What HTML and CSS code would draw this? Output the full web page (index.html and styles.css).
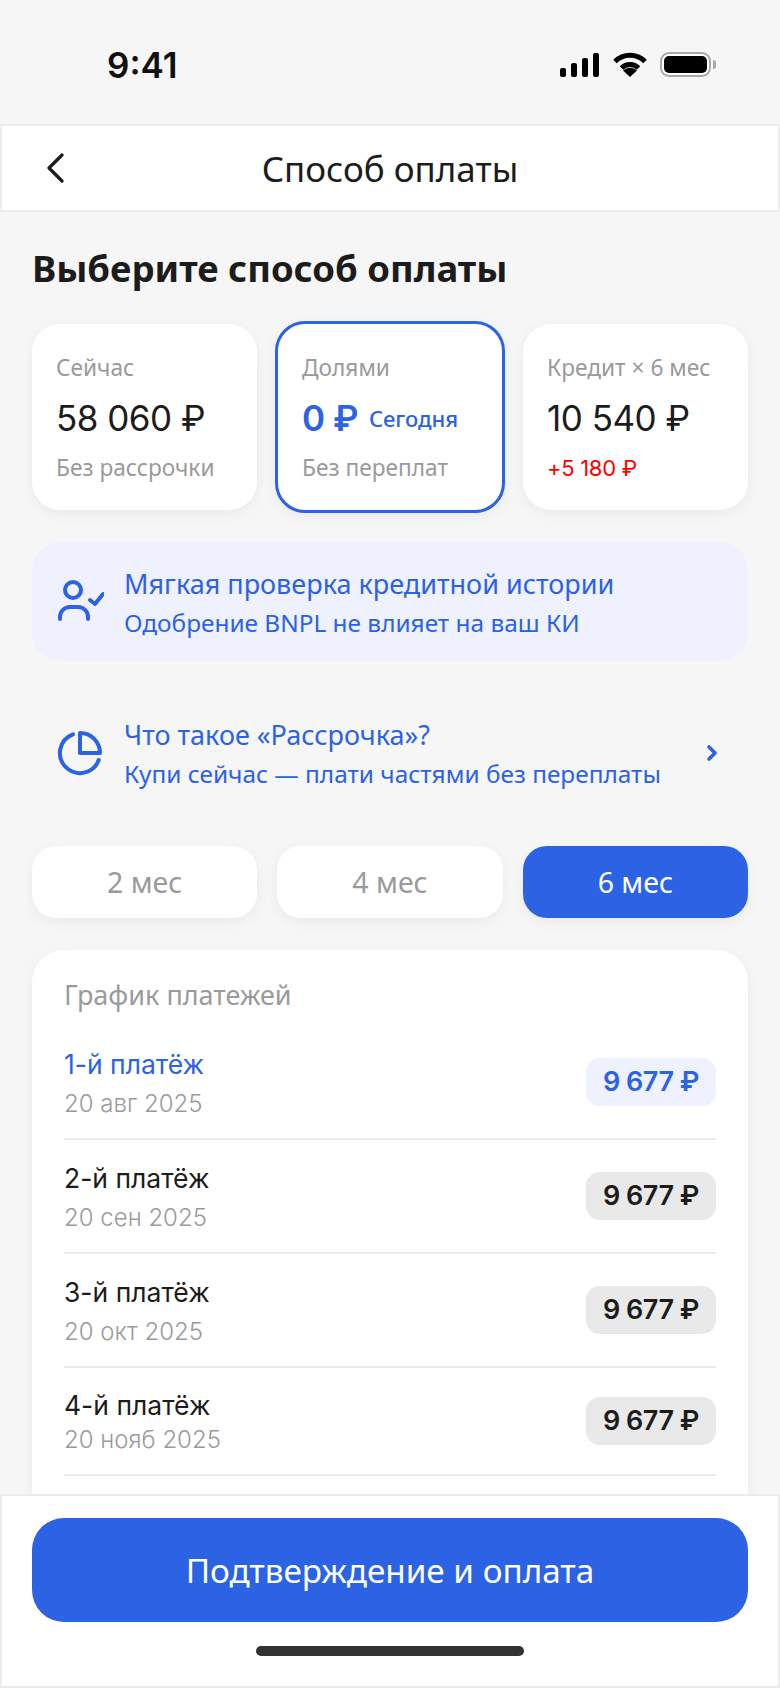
FILE: index.html
```html
<!DOCTYPE html>
<html lang="ru">
<head>
    <meta charset="UTF-8">
    <meta name="viewport" content="width=device-width, initial-scale=1.0">
    <title>Способ оплаты</title>
    <link rel="stylesheet" href="styles.css">
</head>
<body>
    <div class="screen">
        <!-- Статус-бар -->
        <div class="status-bar">
            <span class="time">9:41</span>
            <div class="status-icons">
                <svg class="icon-signal" width="39" height="24" viewBox="0 0 39 24" fill="#000">
                    <rect x="0" y="15" width="6" height="9" rx="2"/>
                    <rect x="11" y="10" width="6" height="14" rx="2"/>
                    <rect x="22" y="5" width="6" height="19" rx="2"/>
                    <rect x="33" y="0" width="6" height="24" rx="2"/>
                </svg>
                <svg class="icon-wifi" width="34" height="25" viewBox="0 0 34 25" fill="none" stroke="#000" stroke-width="5">
                    <path d="M2 9.500A21 21 0 0 1 32 9.500"/>
                    <path d="M8.500 16A12 12 0 0 1 25.500 16"/>
                    <path d="M17 25L10 18.500A10 10 0 0 1 24 18.500Z" fill="#000" stroke="none"/>
                </svg>
                <div class="battery"><div class="battery-fill"></div></div>
                <div class="battery-nub"></div>
            </div>
        </div>

        <!-- Шапка -->
        <header class="top-bar">
            <svg class="back-icon" width="20" height="30" viewBox="0 0 20 30" fill="none" stroke="#1c1c1c" stroke-width="3.200" stroke-linecap="round" stroke-linejoin="round">
                <path d="M16 2L3 15L16 28"/>
            </svg>
            <h2 class="top-title">Способ оплаты</h2>
        </header>

        <!-- Контент -->
        <main class="content">
            <h1 class="page-title">Выберите способ оплаты</h1>

            <div class="plans">
                <div class="plan">
                    <p class="plan-label">Сейчас</p>
                    <p class="plan-price">58 060 ₽</p>
                    <p class="plan-note">Без рассрочки</p>
                </div>
                <div class="plan plan-active">
                    <p class="plan-label">Долями</p>
                    <p class="plan-price plan-price-blue">0 ₽<span class="plan-today">Сегодня</span></p>
                    <p class="plan-note">Без переплат</p>
                </div>
                <div class="plan">
                    <p class="plan-label">Кредит × 6 мес</p>
                    <p class="plan-price">10 540 ₽</p>
                    <p class="plan-note plan-note-red">+5 180 ₽</p>
                </div>
            </div>

            <div class="info-card info-soft">
                <svg class="info-icon" width="48" height="44" viewBox="0 0 48 44" fill="none" stroke="#2c62e4" stroke-width="4" stroke-linecap="round" stroke-linejoin="round">
                    <circle cx="17" cy="10" r="8"/>
                    <path d="M4 39v-2a10 10 0 0 1 10-10h8a10 10 0 0 1 10 10v2"/>
                    <path d="M34 20l5 4l8-10"/>
                </svg>
                <div class="info-body">
                    <p class="info-title">Мягкая проверка кредитной истории</p>
                    <p class="info-text">Одобрение BNPL не влияет на ваш КИ</p>
                </div>
            </div>

            <div class="info-card info-link">
                <svg class="info-icon" width="48" height="48" viewBox="0 0 48 48" fill="none" stroke="#2c62e4" stroke-width="4" stroke-linecap="round" stroke-linejoin="round">
                    <path d="M17 5.300A20 20 0 1 0 42.700 31"/>
                    <path d="M24 24V4A20 20 0 0 1 44 24Z"/>
                </svg>
                <div class="info-body">
                    <p class="info-title">Что такое «Рассрочка»?</p>
                    <p class="info-text">Купи сейчас — плати частями без переплаты</p>
                </div>
                <svg class="chevron" width="12" height="18" viewBox="0 0 12 18" fill="none" stroke="#2c62e4" stroke-width="3.600" stroke-linecap="round" stroke-linejoin="round">
                    <path d="M3 3L9 9L3 15"/>
                </svg>
            </div>

            <div class="tabs">
                <div class="tab">2 мес</div>
                <div class="tab">4 мес</div>
                <div class="tab tab-active">6 мес</div>
            </div>

            <section class="schedule">
                <h3 class="schedule-title">График платежей</h3>
                <div class="pay-row pay-row-current">
                    <div class="pay-info">
                        <p class="pay-name">1-й платёж</p>
                        <p class="pay-date">20 авг 2025</p>
                    </div>
                    <span class="pay-sum">9 677 ₽</span>
                </div>
                <div class="pay-row">
                    <div class="pay-info">
                        <p class="pay-name">2-й платёж</p>
                        <p class="pay-date">20 сен 2025</p>
                    </div>
                    <span class="pay-sum">9 677 ₽</span>
                </div>
                <div class="pay-row">
                    <div class="pay-info">
                        <p class="pay-name">3-й платёж</p>
                        <p class="pay-date">20 окт 2025</p>
                    </div>
                    <span class="pay-sum">9 677 ₽</span>
                </div>
                <div class="pay-row pay-row-tight">
                    <div class="pay-info">
                        <p class="pay-name">4-й платёж</p>
                        <p class="pay-date">20 нояб 2025</p>
                    </div>
                    <span class="pay-sum">9 677 ₽</span>
                </div>
            </section>
        </main>

        <!-- Низ экрана -->
        <footer class="bottom-bar">
            <button class="pay-btn">Подтверждение и оплата</button>
            <div class="home-bar"></div>
        </footer>
    </div>
</body>
</html>
```

FILE: styles.css
```css
* {
    margin: 0;
    padding: 0;
    box-sizing: border-box;
}

body {
    background: #f6f6f6;
    color: #1c1c1c;
    font-family: "Noto Sans", "Open Sans", sans-serif;
}

.screen {
    width: 780px;
    height: 1688px;
    display: flex;
    flex-direction: column;
    overflow: hidden;
}

/* Статус-бар */
.status-bar {
    height: 124px;
    flex: none;
    display: flex;
    justify-content: space-between;
    align-items: flex-start;
    padding: 45px 64px 0 107px;
}

.time {
    font-family: Inter, sans-serif;
    font-size: 35px;
    font-weight: 600;
    line-height: 40px;
    color: #111;
}

.status-icons {
    display: flex;
    align-items: center;
    margin-top: 7px;
}

.icon-signal { margin-right: 14px; }
.icon-wifi { margin-right: 13px; }

.battery {
    width: 51px;
    height: 25px;
    border: 2px solid #a8a8a8;
    border-radius: 9px;
    padding: 2px;
    background: #fff;
}

.battery-fill {
    width: 100%;
    height: 100%;
    background: #000;
    border-radius: 5px;
}

.battery-nub {
    width: 3px;
    height: 9px;
    margin-left: 2px;
    background: #a8a8a8;
    border-radius: 0 3px 3px 0;
}

/* Шапка */
.top-bar {
    height: 88px;
    flex: none;
    background: #fff;
    border: 2px solid #ececec;
    display: flex;
    align-items: center;
    justify-content: center;
    position: relative;
}

.back-icon {
    position: absolute;
    left: 44px;
    top: 27px;
}

.top-title {
    font-size: 35px;
    font-weight: 400;
    line-height: 44px;
    padding-top: 2px;
}

/* Контент */
.content {
    flex: 1;
    min-height: 0;
    overflow: hidden;
    padding: 33px 32px 0;
}

.page-title {
    font-size: 36.500px;
    font-weight: 700;
    line-height: 46px;
    margin-bottom: 33px;
}

.plans {
    display: flex;
    gap: 18px;
    align-items: center;
    height: 186px;
}

.plan {
    width: 225px;
    height: 186px;
    background: #fff;
    border-radius: 28px;
    padding: 29px 0 0 24px;
    box-shadow: 0 4px 14px rgba(0,0,0,0.05);
}

.plan-active {
    width: 230px;
    height: 192px;
    border: 3px solid #2c62e4;
    border-radius: 30px;
}

.plan-label,
.plan-note {
    font-size: 22.700px;
    line-height: 30px;
    color: #9a9a9a;
}

.plan-price {
    font-family: Inter, sans-serif;
    font-size: 35px;
    line-height: 42px;
    letter-spacing: -0.500px;
    margin: 14px 0;
    white-space: nowrap;
}

.plan-price-blue {
    color: #2c62e4;
    font-weight: 600;
}

.plan-today {
    font-family: "Noto Sans", sans-serif;
    font-size: 22px;
    font-weight: 500;
    line-height: 1;
    letter-spacing: 0;
    margin-left: 11px;
    vertical-align: 4px;
}

.plan-note-red {
    font-family: Inter, sans-serif;
    font-size: 22px;
    letter-spacing: -0.300px;
    color: #f00;
}

.info-card {
    display: flex;
    align-items: center;
    color: #2c62e4;
}

.info-soft {
    height: 119px;
    margin-top: 32px;
    padding-left: 24px;
    background: #eff2fe;
    border-radius: 28px;
}

.info-link {
    height: 119px;
    margin-top: 32px;
    padding: 0 30px 0 24px;
}

.info-icon {
    flex: none;
    margin-right: 20px;
}

.info-body {
    flex: 1;
    padding-top: 3px;
}

.info-title {
    font-size: 27px;
    font-weight: 400;
    line-height: 39px;
}

.info-text {
    font-size: 24.400px;
    line-height: 39px;
}

.tabs {
    display: flex;
    gap: 20px;
    margin-top: 34px;
}

.tab {
    flex: 1;
    height: 72px;
    line-height: 72px;
    text-align: center;
    font-size: 28.500px;
    color: #9a9a9a;
    background: #fff;
    border-radius: 24px;
    box-shadow: 0 4px 14px rgba(0,0,0,0.05);
}

.tab-active {
    background: #2c62e4;
    color: #fff;
}

/* График платежей */
.schedule {
    margin-top: 32px;
    background: #fff;
    border-radius: 32px;
    padding: 27px 32px 90px;
    box-shadow: 0 4px 14px rgba(0,0,0,0.05);
}

.schedule-title {
    font-size: 27px;
    font-weight: 400;
    line-height: 36px;
    color: #9a9a9a;
}

.pay-row {
    height: 114px;
    display: flex;
    justify-content: space-between;
    align-items: center;
    border-bottom: 2px solid #ebebeb;
}

.pay-row-current {
    height: 127px;
    padding-top: 13px;
}

.pay-row-tight { height: 108px; }

.pay-info { padding-top: 4px; }

.pay-name {
    font-family: Inter, sans-serif;
    font-size: 26.500px;
    line-height: 40px;
}

.pay-date {
    font-family: Inter, sans-serif;
    font-size: 24px;
    font-weight: 300;
    line-height: 40px;
    color: #9a9a9a;
}

.pay-row-tight .pay-name { line-height: 34px; }
.pay-row-tight .pay-date { line-height: 36px; }

.pay-row-current .pay-name { color: #2c62e4; }

.pay-sum {
    width: 130px;
    height: 48px;
    line-height: 48px;
    text-align: center;
    font-family: Inter, sans-serif;
    font-size: 27px;
    font-weight: 600;
    letter-spacing: -0.500px;
    background: #e9e9e9;
    border-radius: 14px;
}

.pay-row-current .pay-sum {
    background: #eff2fe;
    color: #2c62e4;
}

/* Низ экрана */
.bottom-bar {
    height: 194px;
    flex: none;
    background: #fff;
    border: 2px solid #ececec;
    padding: 22px 30px 0;
}

.pay-btn {
    display: block;
    width: 100%;
    height: 104px;
    border: none;
    border-radius: 32px;
    background: #2c62e4;
    color: #fff;
    font-family: "Noto Sans", sans-serif;
    font-size: 33.300px;
}

.home-bar {
    width: 268px;
    height: 10px;
    margin: 24px auto 0;
    background: #333;
    border-radius: 5px;
}
```
